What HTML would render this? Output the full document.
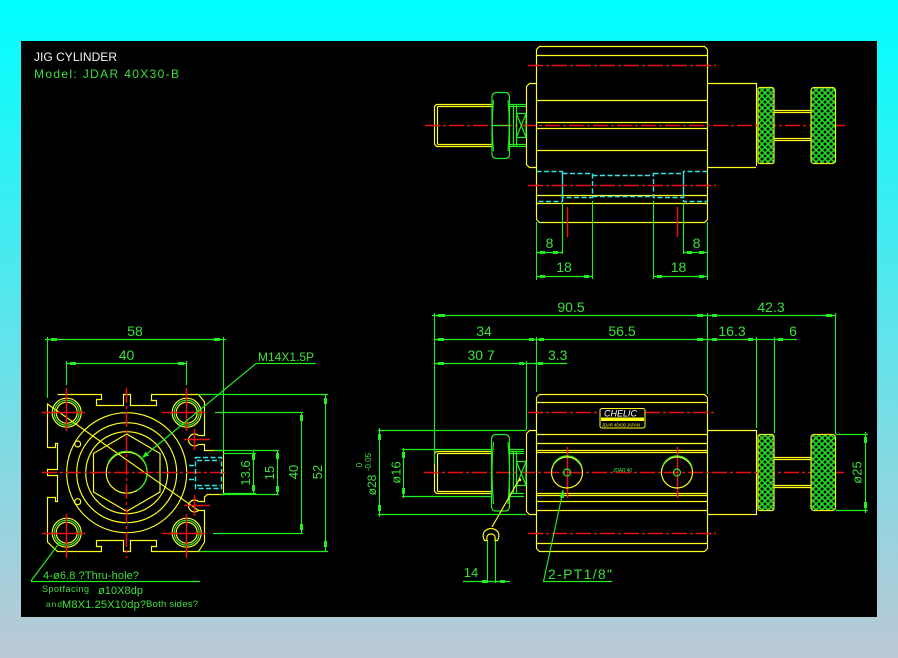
<!DOCTYPE html>
<html><head><meta charset="utf-8"><title>JIG CYLINDER</title>
<style>
html,body{margin:0;padding:0;width:898px;height:658px;overflow:hidden;background:linear-gradient(#00ffff 0,#bcc8d6 100%)}
svg{position:absolute;left:21px;top:41px;display:block}
.y{fill:none;stroke:#ffff1e;stroke-width:1.15}
.g{fill:none;stroke:#22ee22;stroke-width:1.15}
.r{fill:none;stroke:#e81010;stroke-width:1.5}
.rc{fill:none;stroke:#e81010;stroke-width:1.5;stroke-dasharray:15 3 3 3}
.c{fill:none;stroke:#33e4e4;stroke-width:1.4;stroke-dasharray:5 2.5}
.a{fill:none;stroke:#22ee22;stroke-width:3;shape-rendering:crispEdges}
text{font-family:"Liberation Sans",sans-serif;fill:#3be03b;font-size:14px;letter-spacing:0}
.e{text-anchor:middle}
</style></head><body>
<svg width="856" height="576" viewBox="21 41 856 576" xmlns="http://www.w3.org/2000/svg">
<defs>
<pattern id="k" width="6" height="6" patternUnits="userSpaceOnUse">
<rect width="6" height="6" fill="#000"/>
<path d="M-1 1L1-1M0 6L6 0M5 7L7 5M-1 5L1 7M0 0L6 6M5-1L7 1" stroke="#22e022" stroke-width="1.6" fill="none"/>
</pattern>
</defs>
<rect x="21" y="41" width="856" height="576" fill="#000"/>

<!-- title -->
<text x="34" y="61" textLength="83" style="fill:#f4f4f4;font-size:12px">JIG CYLINDER</text>
<text x="34" y="78" textLength="145" style="font-size:12px">Model: JDAR 40X30-B</text>

<!-- TOP VIEW -->
<path class="y" d="M539.5 46.5H704.5L707.5 49.5V219.5L704.5 222.5H539.5L536.5 219.5V49.5ZM536.5 55.5H707.5M536.5 100.5H707.5M536.5 122.5H707.5M536.5 128.5H707.5M536.5 150.5H707.5M536.5 195.5H707.5M536.5 203.5H707.5"/>
<path class="y" d="M536.5 83.5H529.5L526.5 86.5V164.5L529.5 167.5H536.5M707.5 83.5H756.5V166M707.5 167.5H756"/>
<path class="y" d="M491.5 104.5H436.5L434.5 106.5V144L436.5 146.5H491.5M437.5 106.5V144.5M437.5 106.5H491.5M437.5 144.5H491.5"/>
<path class="y" d="M774 110.5H811M774 112.5H811M774 138.5H811M774 140.5H811"/>
<path class="c" d="M536.5 171.5H562.5V201.5H536.5M562.5 173.5H592.5V197.5H562.5ZM592.5 175.5H653.5M592.5 196.5H653.5M653.5 173.5H683.5V197.5H653.5ZM707.5 171.5H683.5V201.5H707.5"/>
<path class="rc" d="M528 65.5H716"/>
<path class="rc" d="M425 125.5H845"/>
<path class="rc" d="M528 185.5H716"/>
<path class="r" d="M567.5 207V237"/>
<path class="r" d="M677.5 207V237"/>
<path class="g" d="M510 104.5H526M510 106.5H526M510 144.5H526M510 146.5H526M513.5 104V146M516.5 104V146M492 125.5H510"/>
<path class="g" d="M536.5 222V280M562.5 203V254M592.5 201V279M707.5 222V280M683.5 203V254M653.5 201V279M536 252.5H562M683 252.5H707M536 276.5H592M653 276.5H707"/>
<path class="g" d="M497 92.5H505Q509.5 92.5 509.5 97V154Q509.5 158.5 505 158.5H497Q492 158.5 492 154V97Q492 92.5 497 92.5Z"/>
<path class="g" d="M493.5 100Q491 125 493.5 151M508 100Q510.5 125 508 151M516.5 113.5H526V137.5H516.5ZM516.5 113.5L526 137.5M526 113.5L516.5 137.5"/>
<rect x="758" y="87.5" width="16" height="76" rx="2" fill="url(#k)" stroke="#e8f020" stroke-width="1.2"/>
<rect x="811" y="87.5" width="24.5" height="76" rx="3" fill="url(#k)" stroke="#e8f020" stroke-width="1.2"/>
<path class="a" d="M540 252.5h5M553 252.5h5M687 252.5h5M699 252.5h5M540 276.5h5M584 276.5h5M657 276.5h5M699 276.5h5"/>
<text x="549.5" y="248" class="e">8</text>
<text x="564" y="272" class="e">18</text>
<text x="696.5" y="248" class="e">8</text>
<text x="678.5" y="272" class="e">18</text>

<!-- FRONT VIEW -->
<path class="y" d="M539.5 394.5H704.5L707.5 397.5V548.5L704.5 551.5H539.5L536.5 548.5V397.5ZM536.5 402.5H707.5M536.5 434.5H707.5M536.5 443.5H707.5M536.5 450.5H707.5M536.5 452.5H707.5M536.5 493.5H707.5M536.5 495.5H707.5M536.5 501.5H707.5M536.5 510.5H707.5M536.5 543.5H707.5"/>
<path class="y" d="M536.5 430.5H529.5L526.5 433.5V511.5L529.5 514.5H536.5M707.5 430.5H756.5V514.5H707.5"/>
<path class="y" d="M491.5 451.5H436.5L434.5 453.5V491L436.5 493.5H491.5M437.5 453.5V491.5M437.5 453.5H491.5M437.5 491.5H491.5"/>
<path class="y" d="M774 457.5H811M774 459.5H811M774 485.5H811M774 487.5H811"/>
<path class="rc" d="M528 412.5H600"/>
<path class="rc" d="M645 412.5H716"/>
<path class="rc" d="M424 472.5H844"/>
<path class="rc" d="M528 533.5H716"/>
<path class="r" d="M567.5 447V498"/>
<path class="r" d="M677.5 447V498"/>
<path class="g" d="M510 451.5H524M510 453.5H524M510 493.5H524M510 449.5H524M510 496.5H524M513.5 451V494M516.5 451V494"/>
<path class="g" d="M496 434.5H505Q509.5 434.5 509.5 440V506Q509.5 511 505 511H496Q491.5 511 491.5 506V440Q491.5 434.5 496 434.5Z"/>
<path class="g" d="M493.5 442Q490.5 472 493.5 504M508 442Q511 472 508 504M516.5 461.5H526V485.5H516.5ZM516.5 461.5L526 485.5M526 461.5L516.5 485.5"/>
<circle cx="567" cy="472.5" r="15.5" class="y"/><path class="g" d="M553 465A15.5 15.5 0 0 1 582 467"/>
<circle cx="567" cy="472.5" r="3.5" class="g"/>
<circle cx="677" cy="472.5" r="15.5" class="y"/><path class="g" d="M663 465A15.5 15.5 0 0 1 692 467"/>
<circle cx="677" cy="472.5" r="3.5" class="g"/>
<rect x="758" y="434.5" width="16" height="76" rx="2" fill="url(#k)" stroke="#e8f020" stroke-width="1.2"/>
<rect x="811" y="434.5" width="24.5" height="76" rx="3" fill="url(#k)" stroke="#e8f020" stroke-width="1.2"/>
<!-- label -->
<rect x="600" y="408.5" width="45" height="19.5" rx="2" fill="#000" stroke="#ffff1e"/>
<rect x="601" y="417.5" width="43" height="3.5" fill="#ffff1e"/>
<text x="604" y="416.5" textLength="33" style="fill:#fff;font-size:9px;font-style:italic">CHELIC</text>
<text x="602" y="426.5" textLength="38" style="fill:#e8e830;font-size:4.5px">JDAR 40X30 JAPAN</text>
<text x="613" y="472" textLength="19" style="font-size:5px">JDAR 40</text>

<path class="g" d="M434.5 313V464M707.5 313V394M835.5 313V434M432 315.5H836M536.5 337V392M434 339.5H707M707 339.5H797M434 363.5H567M526.5 361V430M756.5 337V428M774.5 337V433"/>
<path class="g" d="M378 430.5H526M402 449.5H491M402 496.5H491M378 514.5H526M379.5 428V517M403.5 448V498M836 434.5H868M836 510.5H868M865.5 432V513"/>
<path class="g" d="M487.5 540V583M495.5 540V583M463 581.5H510"/>
<path class="g" d="M612 581.5H543.5L563 491"/>
<path class="y" d="M520 478L492 527"/>
<path class="y" d="M487 540.5H484.5Q482 536 484 532Q487 528.5 491 528.5Q495 528.5 498 532Q500 536 497.5 540.5H495Q496 534 491 534Q486 534 487 540.5Z"/>
<path class="a" d="M438 315.5h7M697 315.5h6M712 315.5h5M826 315.5h6M438 339.5h6M529 339.5h5M539 339.5h5M697 339.5h6M712 339.5h5M748 339.5h5M778 339.5h5M438 363.5h6M519 363.5h5M538 363.5h5M482 581.5h5M500 581.5h5"/>
<path class="a" d="M379.5 434v6M379.5 505v6M403.5 452v6M403.5 488v6M865.5 437v6M865.5 502v6"/>
<circle cx="520" cy="480" r="1.2" fill="#ffff1e"/>
<path d="M563 490l-2.5 7 3 .5z" fill="#22ee22" stroke="#22ee22"/>
<text x="571" y="312" class="e">90.5</text>
<text x="484" y="336" class="e">34</text>
<text x="622" y="336" class="e">56.5</text>
<text x="467.5" y="360">30 7</text>
<text x="548" y="360">3.3</text>
<text x="771" y="312" class="e">42.3</text>
<text x="732" y="336" class="e">16.3</text>
<text x="793" y="336" class="e">6</text>
<text x="471" y="577" class="e" style="font-size:13px">14</text>
<text x="548" y="579" textLength="64">2-PT1/8"</text>
<text transform="rotate(-90 400.5 472.5)" x="400.5" y="472.5" class="e" style="font-size:13px">ø16</text>
<text transform="rotate(-90 861.5 472.5)" x="861.5" y="472.5" class="e" style="font-size:13px">ø25</text>
<text transform="rotate(-90 376 485)" x="376" y="485" class="e" style="font-size:12px">ø28</text>
<text transform="rotate(-90 371 462)" x="371" y="462" class="e" style="font-size:8px">-0.05</text>
<text transform="rotate(-90 362 465)" x="362" y="465" class="e" style="font-size:8px">0</text>

<!-- LEFT VIEW -->
<path class="y" d="M57.5 394.5H101.5V399.5H96.5V405.5H123.5V394.5H130.5V405.5H156.5V400.5H151.5V394.5H198.5L204.5 402V435.5H198.5M198.5 444.5H204.5V450.5H223.5V494.5H207.5L204.5 497V501.5H198.5M198.5 510.5H204.5V542L198.5 551.5H151.5V546.5H156.5V540.5H130.5V551.5H123.5V540.5H96.5V546.5H101.5V551.5H57.5L47.5 542V497.5H55.5V501.5H57.5V475.5H47.5V469.5H57.5V443.5H55.5V447.5H47.5V404Z"/>
<path class="y" d="M198.5 435.5A6 6 0 1 0 198.5 444.5M198.5 501.5A6 6 0 1 0 198.5 510.5"/>
<g class="y"><circle cx="66.7" cy="412.7" r="14.5"/><circle cx="66.7" cy="412.7" r="10.5"/><circle cx="186.7" cy="412.7" r="14.5"/><circle cx="186.7" cy="412.7" r="10.5"/><circle cx="66.7" cy="532.7" r="14.5"/><circle cx="66.7" cy="532.7" r="10.5"/><circle cx="186.7" cy="532.7" r="14.5"/><circle cx="186.7" cy="532.7" r="10.5"/></g>
<g class="g"><circle cx="66.7" cy="412.7" r="12.5"/><circle cx="186.7" cy="412.7" r="12.5"/><circle cx="66.7" cy="532.7" r="12.5"/><circle cx="186.7" cy="532.7" r="12.5"/></g>
<g class="y"><circle cx="126.7" cy="472.7" r="60"/><circle cx="126.7" cy="472.7" r="50"/><circle cx="126.7" cy="472.7" r="41"/><circle cx="126.7" cy="472.7" r="20.5"/><circle cx="77.7" cy="444" r="3"/><circle cx="77.7" cy="501.7" r="3"/>
<path d="M126.7 434L160 453.4V492L126.7 511.4L93.5 492V453.4Z"/></g>
<path class="g" d="M108 463A20.5 20.5 0 0 1 147 472.7A20.5 20.5 0 0 1 137 490.5"/>
<path class="rc" d="M42 472.5H228"/>
<path class="rc" d="M126.5 388V558"/>
<path class="r" d="M42 412.5H85M66.5 388V431M162 412.5H205M186.5 388V431M42 533.5H85M66.5 514V558M162 533.5H205M186.5 514V558M184 439.5H210M194.5 429V450M184 505.5H210M194.5 495V516" stroke-width="1.2"/>
<path class="c" d="M195.5 457.5H221.5V488.5H195.5ZM197 460.5H220M197 485.5H220M189 465.5H195M189 479.5H195"/>
<path class="g" d="M47.5 337V398M223.5 337V450M66.5 361V385M186.5 361V385M45 339.5H226M66 363.5H187"/>
<path class="g" d="M198 394.5H328M215 412.5H303M213 533.5H303M199 551.5H328M213 450.5H279M223 453.5H256M223 493.5H256M220 494.5H279M253.5 451V494M277.5 450V495M301.5 412V533M325.5 394V551"/>
<path class="g" d="M256 363.5H316M31 581.5H200"/>
<path class="g" d="M256 363.5L143 457M31 581L60 542"/>
<path d="M142 458l7-2.5-3.5-4z" fill="#22ee22"/>
<path class="a" d="M51 339.5h6M214 339.5h6M70 363.5h6M178 363.5h6"/>
<path class="a" d="M253.5 454v6M253.5 485v6M277.5 453v6M277.5 486v6M301.5 415v6M301.5 524v6M325.5 398v6M325.5 541v6"/>
<text x="135" y="336" class="e">58</text>
<text x="126.5" y="360" class="e">40</text>
<text x="258" y="361" style="font-size:12px">M14X1.5P</text>
<text transform="rotate(-90 250 473)" x="250" y="473" class="e" style="font-size:13px">13.6</text>
<text transform="rotate(-90 274 473)" x="274" y="473" class="e" style="font-size:13px">15</text>
<text transform="rotate(-90 298 472)" x="298" y="472" class="e" style="font-size:13px">40</text>
<text transform="rotate(-90 322 472)" x="322" y="472" class="e" style="font-size:13px">52</text>
<text x="43" y="579" textLength="96" style="font-size:11px">4-ø6.8 ?Thru-hole?</text>
<text x="42" y="592" textLength="47" style="font-size:9px">Spotfacing</text>
<text x="98" y="594" textLength="45" style="font-size:11px">ø10X8dp</text>
<text x="46" y="607" textLength="16" style="font-size:8px">and</text>
<text x="62" y="608" textLength="84" style="font-size:11px">M8X1.25X10dp?</text>
<text x="146" y="607" textLength="52" style="font-size:9.5px">Both sides?</text>
</svg>
</body></html>
